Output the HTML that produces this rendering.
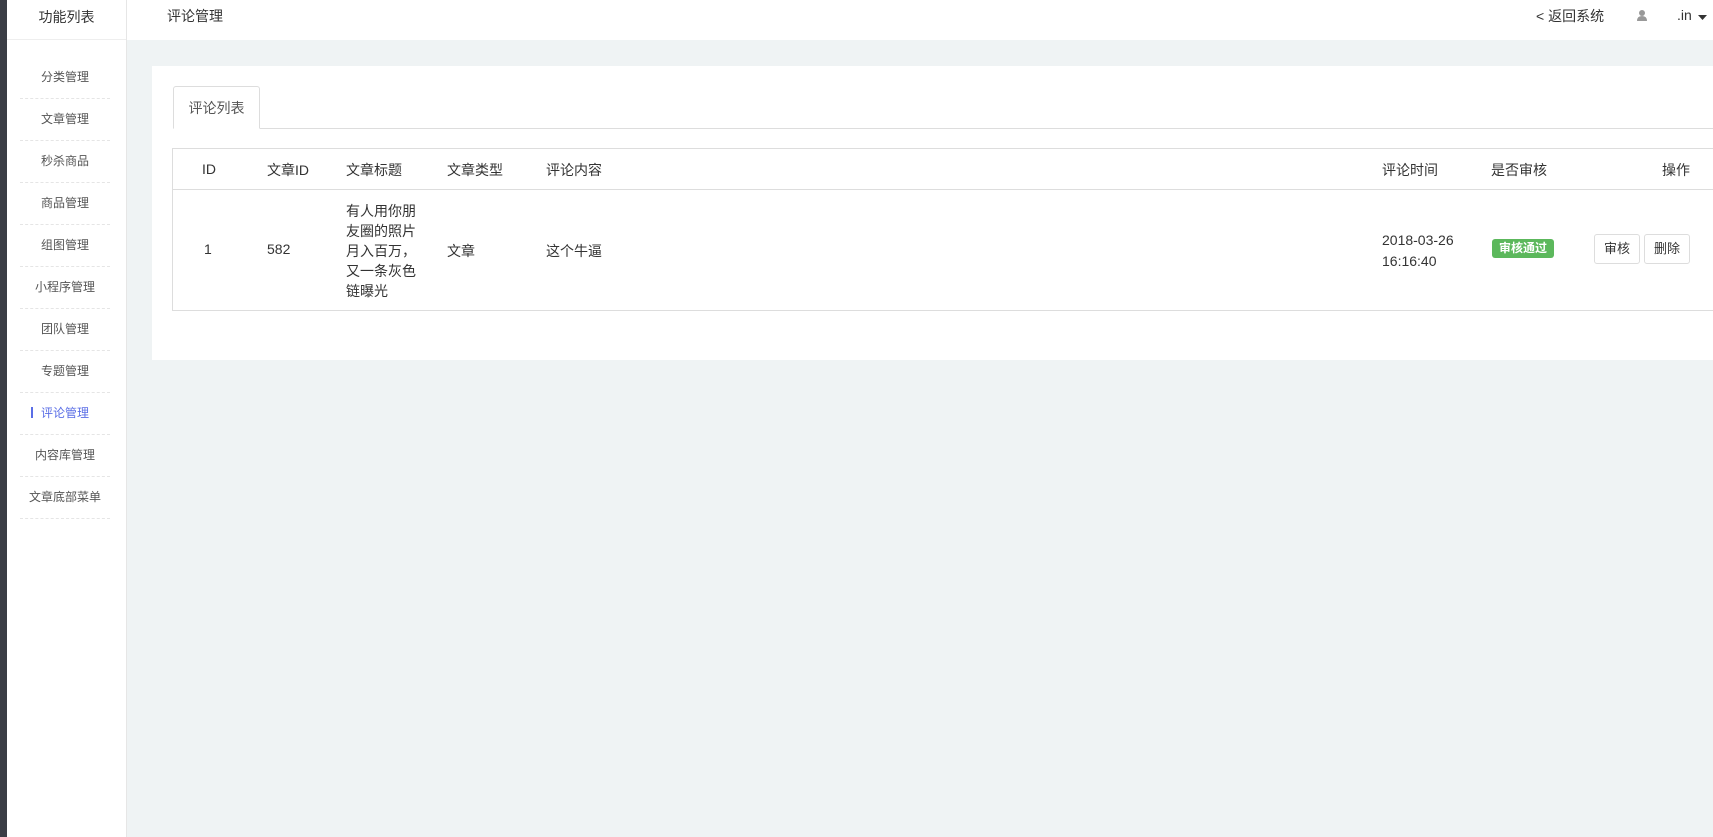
<!DOCTYPE html>
<html><head><meta charset="utf-8"><style>
*{margin:0;padding:0;box-sizing:border-box}
body{width:1713px;height:837px;overflow:hidden;background:#eff3f4;font-family:"Liberation Sans","Noto Sans CJK SC",sans-serif;font-size:13px;color:#333;position:relative}
.abs{position:absolute}
.dark{left:0;top:0;width:7px;height:837px;background:#3a3d45}
.side{left:7px;top:0;width:120px;height:837px;background:#fff;border-right:1px solid #e6e6e6}
.head{left:127px;top:0;width:1586px;height:40px;background:#fff}
.sidehead{left:7px;top:0;width:119px;height:40px;border-bottom:1px solid #eee;text-align:center;line-height:34px;font-size:14px;color:#333}
.item{position:absolute;left:20px;width:90px;height:42px;line-height:40px;text-align:center;border-bottom:1px dashed #e5e5e5;font-size:12px;color:#555}
.item.act{color:#5a6ee6}
.item.act:before{content:"";position:absolute;left:11px;top:14px;width:2px;height:11px;background:#5a6ee6}
.panel{left:152px;top:66px;width:1600px;height:294px;background:#fff}
.tab{left:173px;top:86px;width:87px;height:43px;border:1px solid #ddd;border-bottom:1px solid #fff;border-radius:3px 3px 0 0;background:#fff;text-align:center;line-height:42px;font-size:14px;color:#555}
.tabline{left:173px;top:128px;width:1560px;height:1px;background:#ddd}
.table{left:172px;top:148px;width:1560px;height:163px;border:1px solid #ddd}
.hr{left:172px;top:189px;width:1560px;height:1px;background:#ddd}
.t{position:absolute;font-size:14px;color:#333;white-space:nowrap}
.badge{left:1492px;top:239px;width:62px;height:19px;background:#5cb85c;color:#fff;border-radius:3px;font-size:12px;font-weight:bold;text-align:center;line-height:19px}
.btn{top:234px;width:46px;height:30px;border:1px solid #ddd;border-radius:3px;background:#fff;font-size:13px;text-align:center;line-height:28px;color:#333}
</style></head><body>
<div class="abs dark"></div>
<div class="abs side"></div>
<div class="abs head"></div>
<div class="abs sidehead">功能列表</div>
<div class="t" style="left:167px;top:6px;font-size:14px">评论管理</div>
<div class="t" style="left:1536px;top:6px;font-size:14px">&lt; 返回系统</div>
<svg class="abs" style="left:1636px;top:9px" width="12" height="13" viewBox="0 0 12 13"><circle cx="6" cy="4" r="3" fill="#999"/><path d="M1 12 Q1 7 6 7 Q11 7 11 12Z" fill="#999"/></svg>
<div class="t" style="left:1677px;top:7px;font-size:14px">.in</div>
<svg class="abs" style="left:1698px;top:15px" width="9" height="5"><path d="M0 0H9L4.5 5Z" fill="#333"/></svg>

<div class="item" style="top:57px">分类管理</div>
<div class="item" style="top:99px">文章管理</div>
<div class="item" style="top:141px">秒杀商品</div>
<div class="item" style="top:183px">商品管理</div>
<div class="item" style="top:225px">组图管理</div>
<div class="item" style="top:267px">小程序管理</div>
<div class="item" style="top:309px">团队管理</div>
<div class="item" style="top:351px">专题管理</div>
<div class="item act" style="top:393px">评论管理</div>
<div class="item" style="top:435px">内容库管理</div>
<div class="item" style="top:477px">文章底部菜单</div>

<div class="abs panel"></div>
<div class="abs tabline"></div>
<div class="abs tab">评论列表</div>
<div class="abs table"></div>
<div class="abs hr"></div>
<div class="t" style="left:202px;top:161px">ID</div>
<div class="t" style="left:267px;top:160px">文章ID</div>
<div class="t" style="left:346px;top:160px">文章标题</div>
<div class="t" style="left:447px;top:160px">文章类型</div>
<div class="t" style="left:546px;top:160px">评论内容</div>
<div class="t" style="left:1382px;top:160px">评论时间</div>
<div class="t" style="left:1491px;top:160px">是否审核</div>
<div class="t" style="left:1662px;top:160px">操作</div>

<div class="t" style="left:204px;top:241px">1</div>
<div class="t" style="left:267px;top:241px">582</div>
<div class="t" style="left:346px;top:201px;line-height:20px;white-space:normal;width:75px">有人用你朋友圈的照片月入百万，又一条灰色链曝光</div>
<div class="t" style="left:447px;top:241px">文章</div>
<div class="t" style="left:546px;top:241px">这个牛逼</div>
<div class="t" style="left:1382px;top:230px;line-height:21px">2018-03-26<br>16:16:40</div>
<div class="abs badge">审核通过</div>
<div class="abs btn" style="left:1594px">审核</div>
<div class="abs btn" style="left:1644px">删除</div>
</body></html>
